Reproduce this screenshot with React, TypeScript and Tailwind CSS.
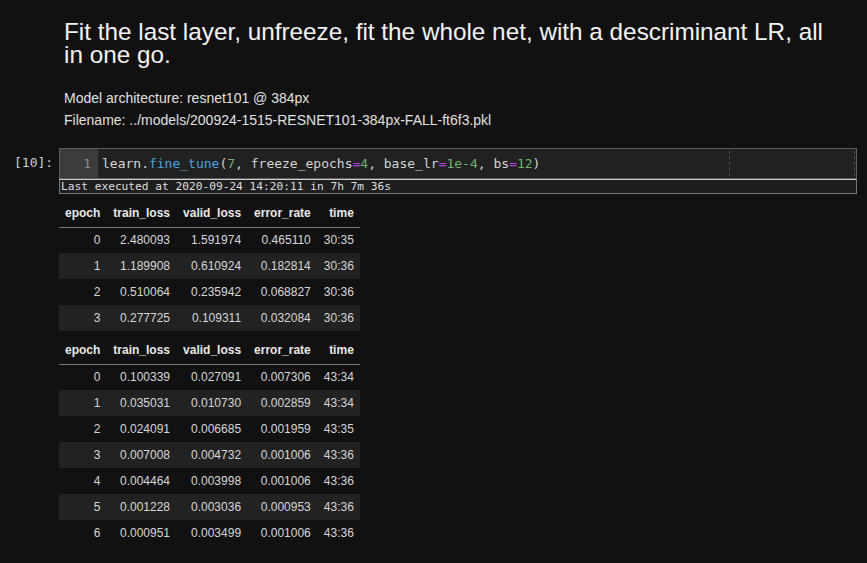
import React from "react";

const mono = "font-['DejaVu_Sans_Mono',monospace]";

const table1 = [
  ["0", "2.480093", "1.591974", "0.465110", "30:35"],
  ["1", "1.189908", "0.610924", "0.182814", "30:36"],
  ["2", "0.510064", "0.235942", "0.068827", "30:36"],
  ["3", "0.277725", "0.109311", "0.032084", "30:36"],
];

const table2 = [
  ["0", "0.100339", "0.027091", "0.007306", "43:34"],
  ["1", "0.035031", "0.010730", "0.002859", "43:34"],
  ["2", "0.024091", "0.006685", "0.001959", "43:35"],
  ["3", "0.007008", "0.004732", "0.001006", "43:36"],
  ["4", "0.004464", "0.003998", "0.001006", "43:36"],
  ["5", "0.001228", "0.003036", "0.000953", "43:36"],
  ["6", "0.000951", "0.003499", "0.001006", "43:36"],
];

const headers = ["epoch", "train_loss", "valid_loss", "error_rate", "time"];

const ResultTable = ({ rows }: { rows: string[][] }) => {
  return (
    <table className="border-collapse text-[12px] font-['Liberation_Sans',Arial,sans-serif]">
      <thead>
        <tr className="h-[27px] border-b border-[#7a7a7a]">
          {headers.map((h, j) => (
            <th
              key={h}
              className={`${j === 0 ? "pl-[6px]" : "pl-[7px]"} pr-[6px] text-right font-bold text-[#e8e8e8]`}
            >
              {h}
            </th>
          ))}
        </tr>
      </thead>
      <tbody>
        {rows.map((r, i) => (
          <tr
            key={i}
            className={i % 2 === 1 ? "h-[26px] bg-[#222222]" : "h-[26px]"}
          >
            {r.map((c, j) => (
              <td
                key={j}
                className={`${j === 0 ? "pl-[6px]" : "pl-[7px]"} pr-[6px] text-right text-[#d6d6d6]`}
              >
                {c}
              </td>
            ))}
          </tr>
        ))}
      </tbody>
    </table>
  );
};

const App = () => {
  return (
    <div className="min-h-[563px] w-[867px] bg-[#111111] font-['Liberation_Sans',Arial,sans-serif]">
      {/* markdown cell */}
      <div className="pl-[64px] pt-[20px]">
        <h1 className="w-[770px] text-[24.3px] leading-[23px] text-[#f2f2f2]">
          Fit the last layer, unfreeze, fit the whole net, with a descriminant
          LR, all in one go.
        </h1>
        <div className="mt-[21px] text-[14px] leading-[22px] text-[#e0e0e0]">
          <p>Model architecture: resnet101 @ 384px</p>
          <p>Filename: ../models/200924-1515-RESNET101-384px-FALL-ft6f3.pkl</p>
        </div>
      </div>

      {/* code cell */}
      <div className="mt-[17px] flex">
        <div
          className={`w-[59px] pt-[7px] pl-[14px] text-[13px] leading-[16px] text-[#cfcfcf] ${mono}`}
        >
          [10]:
        </div>
        <div className="w-[798px]">
          <div className="relative flex h-[31px] border border-[#5c5c5c] bg-[#212121]">
            <div
              className={`w-[38px] bg-[#3c3c3c] pr-[7px] pt-[7px] text-right text-[13px] leading-[16px] text-[#8c8c8c] ${mono}`}
            >
              1
            </div>
            <div
              className={`pl-[4px] pt-[7px] text-[13px] leading-[16px] whitespace-pre text-[#d4d4d4] ${mono}`}
            >
              learn.<span className="text-[#4aa3df]">fine_tune</span>(
              <span className="text-[#6fb36f]">7</span>, freeze_epochs
              <span className="text-[#b040e0]">=</span>
              <span className="text-[#6fb36f]">4</span>, base_lr
              <span className="text-[#b040e0]">=</span>
              <span className="text-[#6fb36f]">1e-4</span>, bs
              <span className="text-[#b040e0]">=</span>
              <span className="text-[#6fb36f]">12</span>)
            </div>
            <div className="absolute top-[2px] bottom-[2px] left-[669px] border-l border-dashed border-[#4e4e4e]" />
            <div className="absolute top-[2px] bottom-[2px] left-[794px] border-l border-dashed border-[#4e4e4e]" />
          </div>
          <div
            className={`h-[15px] border border-t-[#d0d0d0] border-x-[#777777] border-b-[#777777] bg-[#1e1e1e] pl-px text-[11.2px] leading-[13px] text-[#dedede] ${mono}`}
          >
            Last executed at 2020-09-24 14:20:11 in 7h 7m 36s
          </div>
        </div>
      </div>

      {/* outputs */}
      <div className="ml-[59px] mt-[6px] flex flex-col items-start gap-[6px] pb-[18px]">
        <ResultTable rows={table1} />
        <ResultTable rows={table2} />
      </div>
    </div>
  );
};

export default App;
